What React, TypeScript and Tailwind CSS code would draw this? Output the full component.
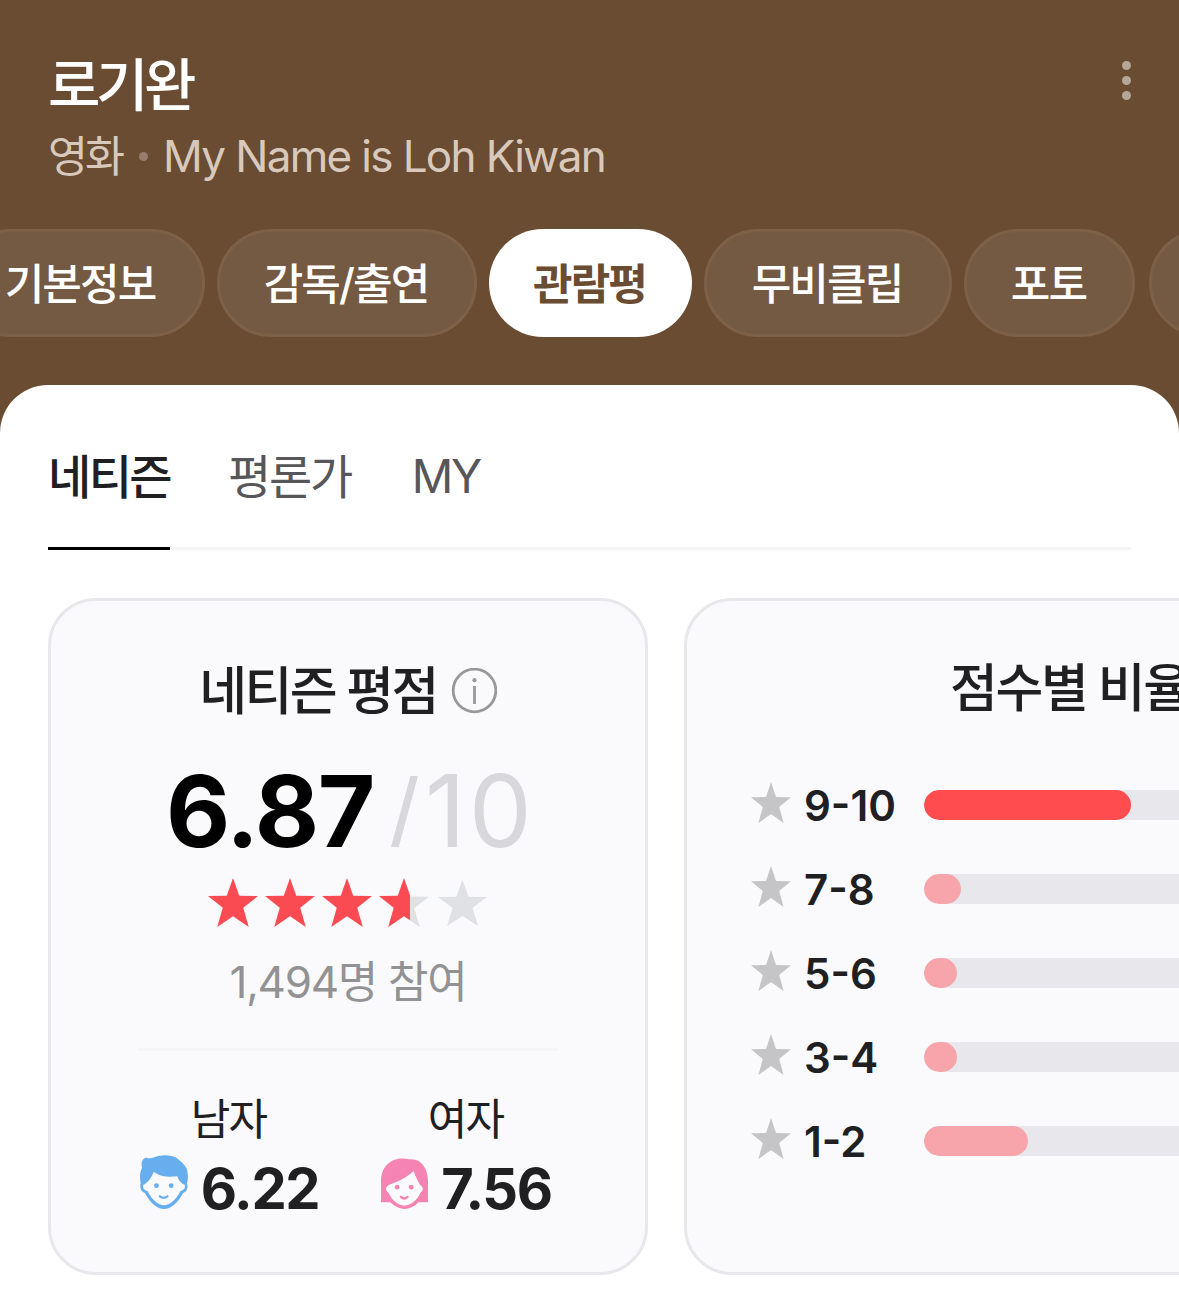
import React from 'react';

const STAR = 'M50 0 L62.5 35 L100 35.5 L70.5 58.5 L81.5 96 L50 75 L18.5 96 L29.5 58.5 L0 35.5 L37.5 35 Z';

const PILLS = [
    { label: '기본정보', width: 'w-[248px]' },
    { label: '감독/출연', width: 'w-[260px]' },
    { label: '관람평', width: 'w-[203px]', active: true },
    { label: '무비클립', width: 'w-[248px]' },
    { label: '포토', width: 'w-[171px]' },
];

const RATIOS = [
    { label: '9-10', fill: 207, top: true },
    { label: '7-8', fill: 37 },
    { label: '5-6', fill: 33 },
    { label: '3-4', fill: 33 },
    { label: '1-2', fill: 104 },
];

const Star = ({ className }: { className: string }) => (
    <svg viewBox="0 0 100 96" preserveAspectRatio="none" className={className} fill="currentColor">
        <path d={STAR} />
    </svg>
);

const InfoIcon = () => (
    <svg viewBox="0 0 46 46" className="h-[46px] w-[46px] shrink-0" fill="none">
        <circle cx="23.5" cy="22.5" r="21.3" stroke="#98989a" strokeWidth="2.8" />
        <circle cx="23.5" cy="12.2" r="2.1" fill="#98989a" />
        <path d="M23.5 18v18" stroke="#98989a" strokeWidth="2.8" />
    </svg>
);

const ManIcon = () => (
    <svg viewBox="0 0 140 162" className="-mt-[14px] h-[54px] w-[48px] shrink-0" preserveAspectRatio="none">
        <path d="M2 84 C-2 66 0 50 6 38 C2 26 6 10 18 8 C22 10 28 11 34 9 C56 -1 84 -3 104 7 C112 14 118 18 124 24 C140 38 143 62 137 86 C142 98 136 110 126 114 C110 144 90 162 70 162 C50 162 30 144 14 114 C4 110 -2 98 2 84 Z" fill="#67aeef" />
        <path d="M40 50 C60 66 84 66 109 64 C112 76 120 86 130 89 C134 98 128 105 118 108 C105 135 86 151 70 151 C54 151 35 135 22 108 C12 105 6 98 10 89 C22 84 34 68 40 50 Z" fill="#fafafc" />
        <circle cx="48" cy="92" r="7" fill="#67aeef" />
        <circle cx="91" cy="92" r="7" fill="#67aeef" />
        <path d="M58 124 Q69 133 80 124" fill="none" stroke="#67aeef" strokeWidth="7" strokeLinecap="round" />
    </svg>
);

const WomanIcon = () => (
    <svg viewBox="0 0 140 152" className="-mt-[12px] h-[51px] w-[47px] shrink-0">
        <path d="M0 132 V64 C2 22 36 -8 84 4 C118 0 138 28 140 64 V132 H112 C98 146 84 152 70 152 C56 152 42 146 28 132 Z" fill="#f584b3" />
        <path d="M24 80 C54 70 80 56 97 39 C102 52 108 66 116 80 C127 88 127 97 118 103 C108 127 87 142 70 142 C53 142 32 127 22 103 C12 97 13 87 24 80 Z" fill="#fafafc" />
        <circle cx="48" cy="87" r="7" fill="#f584b3" />
        <circle cx="90" cy="87" r="7" fill="#f584b3" />
        <path d="M59 116 Q69 125 79 116" fill="none" stroke="#f584b3" strokeWidth="7" strokeLinecap="round" />
    </svg>
);

const Gender = ({ label, score, icon }: { label: string; score: string; icon: React.ReactNode }) => (
    <div className="flex w-[237px] flex-col items-center">
        <div className="h-[60px] pr-[2px] text-[43px] leading-[60px] font-normal tracking-[-1.8px]">{label}</div>
        <div className="flex h-[80px] items-center gap-[13px]">
            {icon}
            <span className="text-[56px] leading-[80px] font-bold tracking-[-1.4px]">{score}</span>
        </div>
    </div>
);

export default function App() {
    return (
        <div className="flex h-[1310px] w-[1179px] flex-col overflow-hidden bg-[#6a4c32] font-['Inter','Noto_Sans_CJK_KR',sans-serif] whitespace-nowrap text-[#202023]">
            {/* HEADER */}
            <header className="flex h-[229px] shrink-0 justify-between pt-[46px] pr-[48px] pl-[48px]">
                <div>
                    <h1 className="h-[80px] text-[57px] leading-[80px] font-medium tracking-[-4.4px] text-white">로기완</h1>
                    <div className="-mt-px flex h-[62px] items-center text-[44px] leading-[62px] text-[#d9c9bd]">
                        <span className="text-[43.5px] tracking-[-3px]">영화</span>
                        <i className="mr-[15px] ml-[17px] h-[9px] w-[9px] rounded-full bg-[#977d6c]" />
                        <span className="tracking-[-1.65px]">My Name is Loh Kiwan</span>
                    </div>
                </div>
                <button className="mt-[15px] flex h-[39px] flex-col justify-between">
                    <i className="h-[9px] w-[9px] rounded-full bg-[#b5a698]" />
                    <i className="h-[9px] w-[9px] rounded-full bg-[#b5a698]" />
                    <i className="h-[9px] w-[9px] rounded-full bg-[#b5a698]" />
                </button>
            </header>

            {/* MENU PILLS */}
            <nav className="-ml-[43px] flex h-[156px] shrink-0 gap-3">
                {PILLS.map(p => (
                    <button
                        key={p.label}
                        className={`h-[108px] shrink-0 rounded-full pt-[3px] pr-[2px] text-[43px] tracking-[-1.9px] ${p.width} ${p.active ? 'bg-white font-bold text-[#6a4c32]' : 'border-[3px] border-[#7c6048] bg-[#755a43] font-medium text-white'}`}
                    >
                        {p.label}
                    </button>
                ))}
                <button className="ml-[2px] h-[108px] w-[200px] shrink-0 rounded-full border-[3px] border-[#7c6048] bg-[#755a43]" />
            </nav>

            {/* SHEET */}
            <main className="flex-1 rounded-t-[48px] bg-white pl-[48px]">
                <div className="mr-[48px] flex h-[165px] gap-[58px] border-b-[3px] border-[#f5f5f5] text-[47px] leading-[183px] tracking-[-2.3px] text-[#57575a]">
                    <button className="-mb-[3px] h-[165px] w-[122px] border-b-[3px] border-black pr-[2px] font-medium tracking-[-2.6px] text-[#202023]">네티즌</button>
                    <button className="h-[162px]">평론가</button>
                    <button className="ml-[3px] h-[162px] text-[46px] tracking-[-2.5px]">MY</button>
                </div>

                <div className="mt-[48px] flex gap-9">
                    {/* SCORE CARD */}
                    <section className="flex h-[677px] w-[600px] shrink-0 flex-col items-center rounded-[48px] border-[3px] border-[#e8e8ec] bg-[#fafafc]">
                        <div className="mt-[55px] flex h-[70px] items-center gap-[14px] text-[52px] leading-[70px] font-medium tracking-[-2.6px]">
                            <span className="pt-px">네티즌 평점</span>
                            <InfoIcon />
                        </div>
                        <div className="mt-[35px] ml-[115px] flex h-[100px] items-center self-start text-[99px] leading-[100px] text-[#d8d8dc]">
                            <b className="w-[225px] tracking-[-1.4px] text-black">6.87</b>
                            <span className="w-[33px] pt-[4px] font-['Liberation_Sans',sans-serif] text-[97px] leading-[100px]">/</span>
                            <span className="ml-px text-[100px] tracking-[3px]">10</span>
                        </div>
                        <div className="mt-[16.5px] mr-[2px] flex h-[49px] gap-[7px] text-[#fb4b52]">
                            <Star className="h-[49px] w-[50px]" />
                            <Star className="h-[49px] w-[50px]" />
                            <Star className="h-[49px] w-[50px]" />
                            <div className="relative h-[49px] w-[50px]">
                                <Star className="mt-px h-[48px] w-[50px] text-[#e0e1e4]" />
                                <div className="absolute inset-y-0 left-0 w-[31px] overflow-hidden">
                                    <Star className="h-[49px] w-[50px] max-w-none" />
                                </div>
                            </div>
                            <Star className="mt-[2.5px] ml-[2px] h-[46px] w-[49px] text-[#e0e1e4]" />
                        </div>
                        <div className="mt-[25.5px] h-[60px] text-[44px] leading-[60px] tracking-[-1.3px] text-[#929294]">1,494명 참여</div>
                        <div className="mt-[36px] h-[3px] w-[420px] bg-[#f5f5f7]" />
                        <div className="mt-[38px] flex">
                            <Gender label="남자" score="6.22" icon={<ManIcon />} />
                            <Gender label="여자" score="7.56" icon={<WomanIcon />} />
                        </div>
                    </section>

                    {/* RATIO CARD */}
                    <section className="h-[677px] w-[760px] shrink-0 rounded-[48px] border-[3px] border-[#e8e8ec] bg-[#fafafc] pl-[64px]">
                        <div className="mt-[53px] ml-[199px] h-[70px] text-[52px] leading-[70px] font-medium tracking-[-2.4px]">점수별 비율</div>
                        <div className="mt-[39px]">
                            {RATIOS.map(r => (
                                <div key={r.label} className="flex h-[84px] items-center">
                                    <Star className="-mt-[6px] h-[41px] w-[40px] shrink-0 text-[#c5c5c7]" />
                                    <span className="ml-[13px] w-[120px] shrink-0 pt-px text-[42px] leading-[60px] font-semibold">{r.label}</span>
                                    <div className="h-[30px] w-[520px] shrink-0 overflow-hidden rounded-full bg-[#e8e8ec]">
                                        <div className={`h-full rounded-full ${r.top ? 'bg-[#ff4d4f]' : 'bg-[#f7a5aa]'}`} style={{ width: r.fill }} />
                                    </div>
                                </div>
                            ))}
                        </div>
                    </section>
                </div>
            </main>
        </div>
    );
}
